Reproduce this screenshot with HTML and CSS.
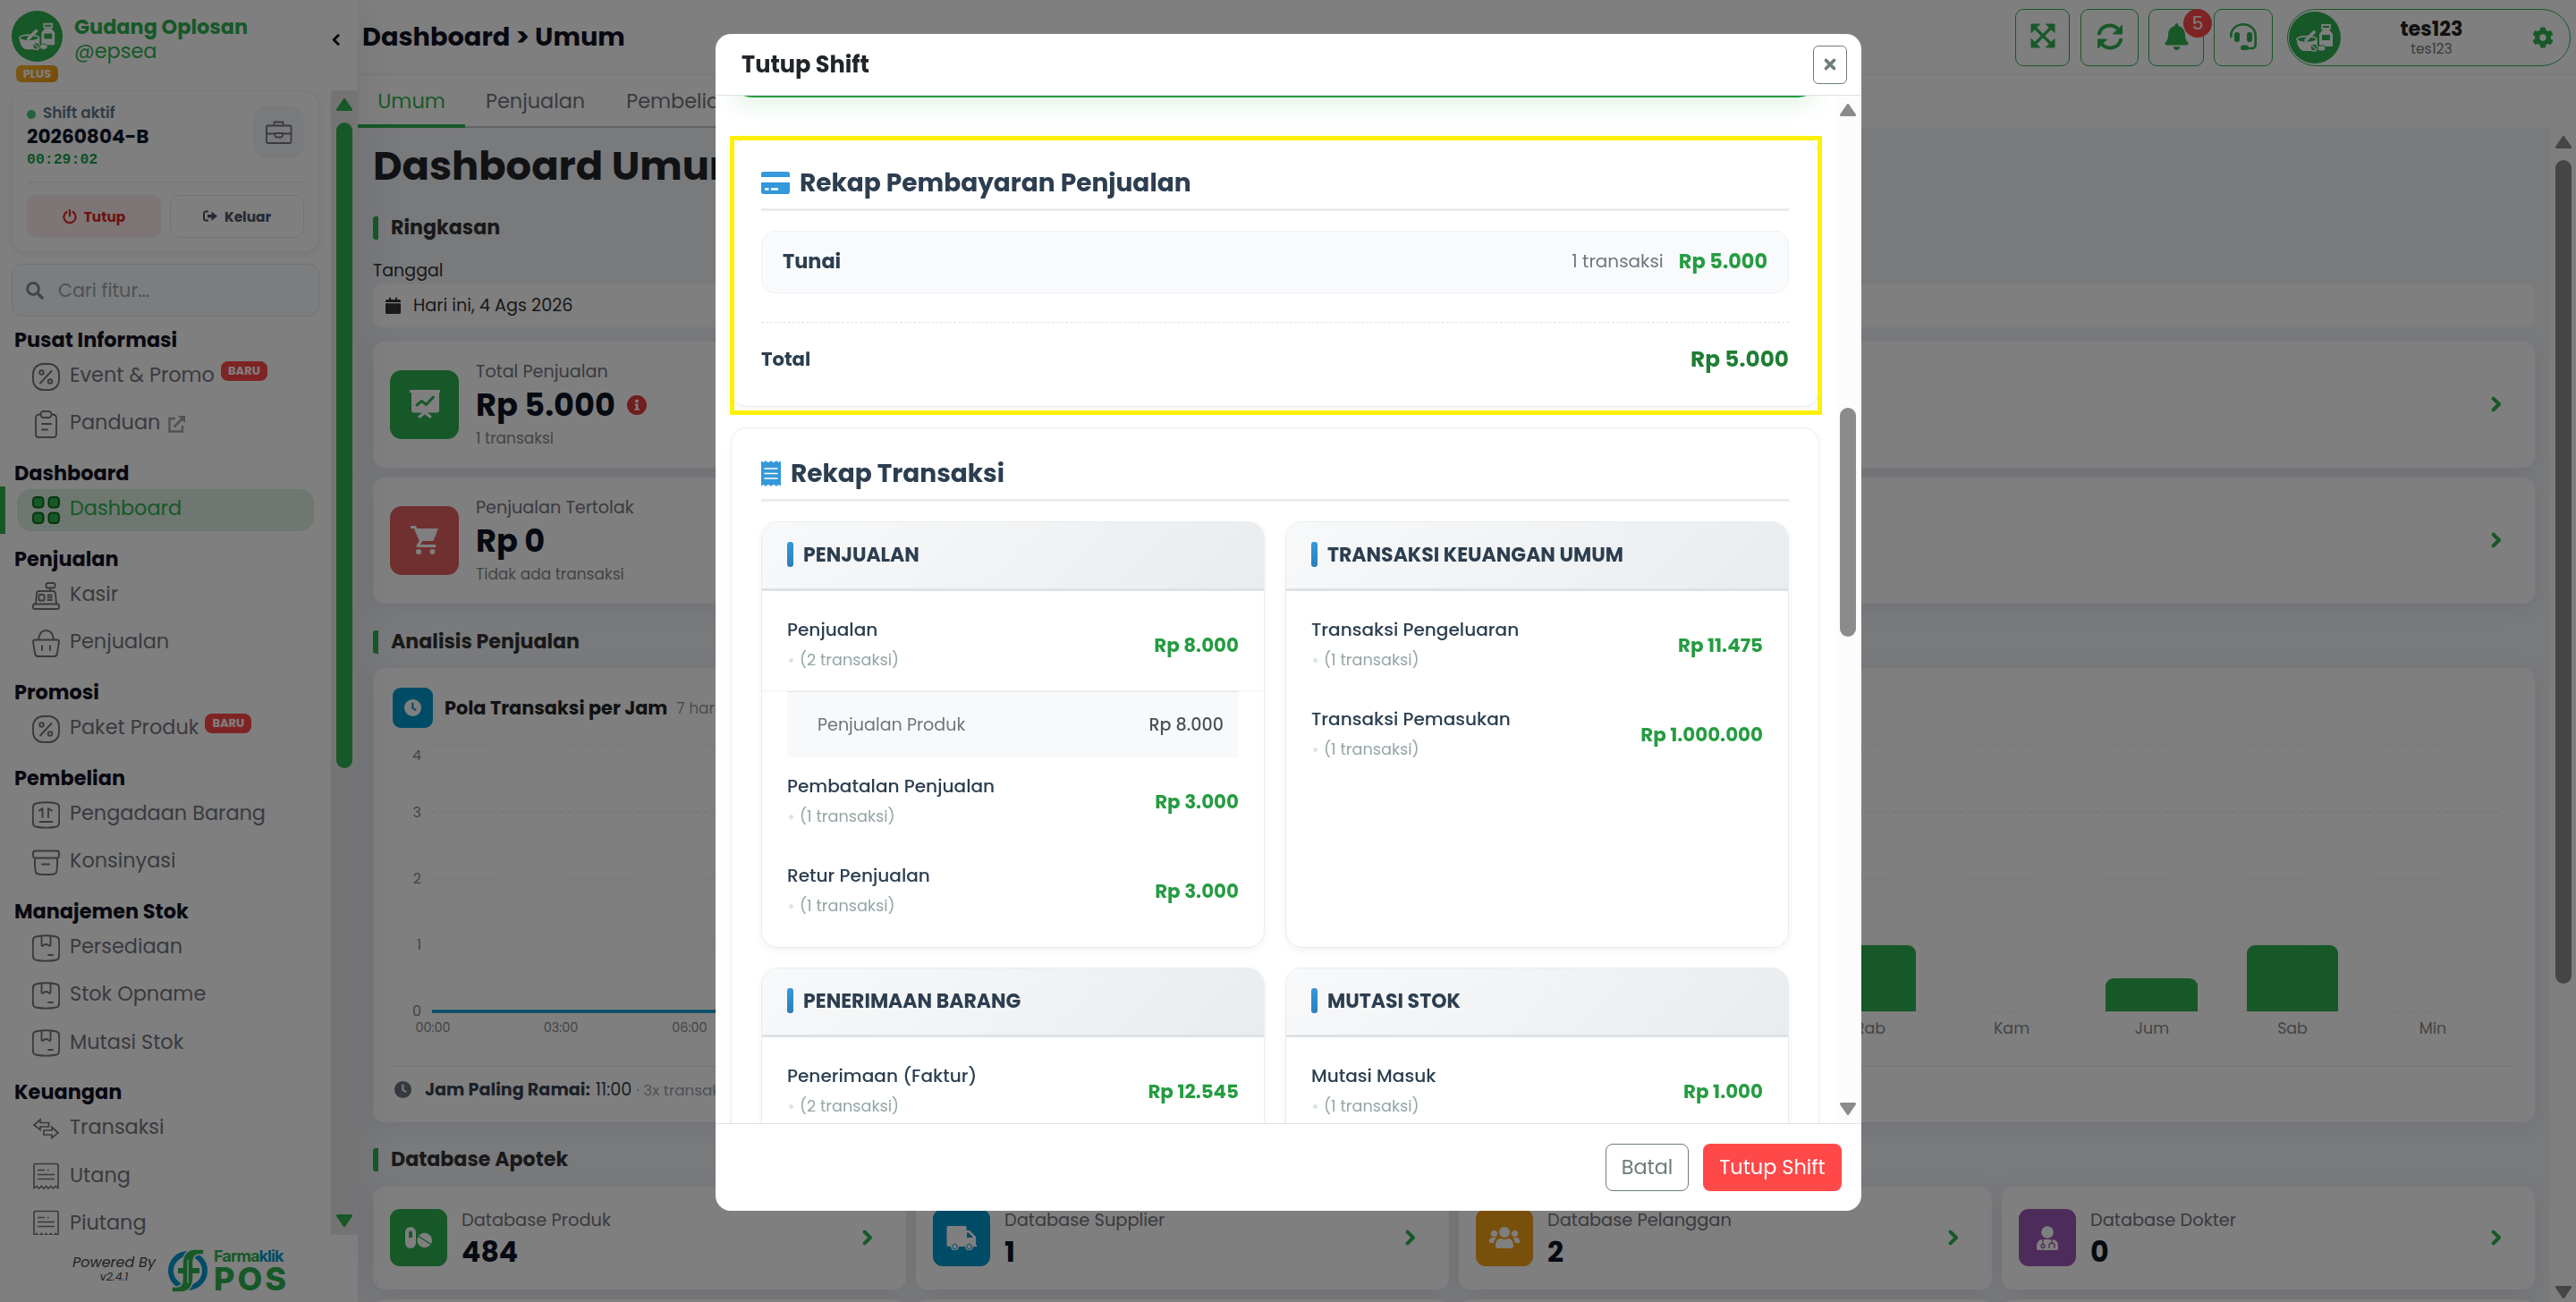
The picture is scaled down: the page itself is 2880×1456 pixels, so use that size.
FILE: index.html
```html
<!DOCTYPE html>
<html lang="id">
<head>
  <meta charset="UTF-8">
  <title>Dashboard - Gudang Oplosan</title>
  <meta name="viewport" content="width=device-width, initial-scale=1.0">
  <link rel="stylesheet" href="styles.css">
</head>
<body>

  <!-- Icon sprite -->
  <svg class="sprite" width="0" height="0">
    <symbol id="i-pharmacy" viewBox="0 0 58 58">
      <circle cx="29" cy="29" r="29" fill="#2fb150"/>
      <path d="M9 32h23c0 7-3 10-6 12H16c-4-2-7-6-7-12z" fill="#fff"/>
      <ellipse cx="20" cy="31" rx="11" ry="3.4" fill="#2fb150" stroke="#fff" stroke-width="1.6"/>
      <path d="M19 32l9-9" stroke="#fff" stroke-width="3.6" stroke-linecap="round"/>
      <path d="M37 15h9v4h-9z" fill="none" stroke="#fff" stroke-width="1.8"/>
      <path d="M38 20h7l4 5v14H34V25z" fill="#fff"/>
      <rect x="37" y="26" width="9" height="6" fill="#2fb150"/>
      <circle cx="28" cy="40" r="4" fill="#2fb150" stroke="#fff" stroke-width="1.6"/>
      <path d="M26 38l4 4" stroke="#fff" stroke-width="1.4"/>
      <rect x="32" y="38" width="9" height="6" rx="3" fill="#fff" stroke="#2fb150"/>
    </symbol>
    <symbol id="i-chev" viewBox="0 0 12 18"><path d="M2.6 2.6L9 9l-6.400 6.400" fill="none" stroke="currentColor" stroke-width="4" stroke-linecap="round" stroke-linejoin="round"/></symbol>
    <symbol id="i-briefcase" viewBox="0 0 30 26"><g fill="none" stroke="currentColor" stroke-width="1.800" stroke-linejoin="round"><rect x="1" y="5.500" width="27.500" height="19.500" rx="1.500"/><path d="M9.500 5.500V1.500h10v4M1 14.500h9.500M19 14.500h9.500M10.500 14v3l1.500 1.500h5.500l1.500-1.500v-3z"/></g></symbol>
    <symbol id="i-power" viewBox="0 0 16 16"><path d="M4.500 3a6.600 6.600 0 1 0 7 0M8 1v6.500" fill="none" stroke="currentColor" stroke-width="2.200" stroke-linecap="round"/></symbol>
    <symbol id="i-exit" viewBox="0 0 16 14"><path d="M6 1.500H3a2 2 0 0 0-2 2v6a2 2 0 0 0 2 2h3" fill="none" stroke="currentColor" stroke-width="2"/><path d="M5 5h4.500V1.500L16 6.700 9.500 12V8.500H5z" fill="currentColor"/></symbol>
    <symbol id="i-search" viewBox="0 0 20 20"><circle cx="8" cy="8" r="6.400" fill="none" stroke="currentColor" stroke-width="3"/><path d="M13 13l5 5" stroke="currentColor" stroke-width="3.500" stroke-linecap="round"/></symbol>
    <symbol id="i-percent" viewBox="0 0 31 31"><g fill="none" stroke="currentColor" stroke-width="1.900" stroke-linecap="round"><rect x="1" y="1" width="29" height="29" rx="11"/><path d="M9 22.500L21.500 9"/><circle cx="10.500" cy="10.500" r="2.300"/><circle cx="20" cy="20.500" r="2.300"/></g></symbol>
    <symbol id="i-clip" viewBox="0 0 31 31"><g fill="none" stroke="currentColor" stroke-width="1.900" stroke-linecap="round"><path d="M9 4.500C5 4.500 4 5.500 4 9v17c0 3 1 4 3 4h17c2 0 3-1 3-4V9c0-3.500-1-4.500-5-4.500"/><rect x="9.500" y="1" width="12" height="7" rx="3.200"/><path d="M11 15h10M11 21.500h6"/></g></symbol>
    <symbol id="i-grid" viewBox="0 0 31 31"><g fill="#2fb150" stroke="#0b6a1c" stroke-width="2"><rect x="1" y="1" width="11.500" height="11.500" rx="3.500"/><rect x="18.500" y="1" width="11.500" height="11.500" rx="3.500"/><rect x="1" y="18.500" width="11.500" height="11.500" rx="3.500"/><rect x="18.500" y="18.500" width="11.500" height="11.500" rx="3.500"/></g></symbol>
    <symbol id="i-kasir" viewBox="0 0 31 31"><g fill="none" stroke="currentColor" stroke-width="1.900" stroke-linecap="round" stroke-linejoin="round"><rect x="15.500" y="1" width="10" height="5.500" rx="2"/><path d="M20 6.500V10M4 24.500l1-11.500c0-2 1-3 3-3h15c2 0 3 1 3 3l1 11.500"/><rect x="1" y="24.500" width="29" height="5.500" rx="1.500"/><rect x="7.500" y="14" width="6" height="6.500" rx="1"/><path d="M17.500 14.500h4.500M17.500 20h4.500M17.500 17.300h4.500"/></g></symbol>
    <symbol id="i-basket" viewBox="0 0 31 31"><g fill="none" stroke="currentColor" stroke-width="1.900" stroke-linecap="round" stroke-linejoin="round"><path d="M1 13.500c0-1.500.8-2 2-2h25c1.200 0 2 .5 2 2l-2 13c-.4 2.500-1 3.500-3.500 3.500h-18C4 30 3.400 29 3 26.500zM7 11C8 4 11 1 15.500 1S23 4 24 11M11 18v5M20 18v5"/></g></symbol>
    <symbol id="i-order" viewBox="0 0 31 31"><g fill="none" stroke="currentColor" stroke-width="1.900" stroke-linecap="round" stroke-linejoin="round"><path d="M4 2.500C12 .7 19 .7 27 2.500c2 .5 3 2 3 4 .4 6 .4 12 0 18 0 2-1 3.500-3 4-8 1.600-15 1.600-23 0-2-.5-3-2-3-4-.4-6-.4-12 0-18 0-2 1-3.500 3-4z"/><path d="M8 10.500L11.500 8v10M18 18V8l4 2.500M8.500 23h14"/></g></symbol>
    <symbol id="i-archive" viewBox="0 0 31 31"><g fill="none" stroke="currentColor" stroke-width="1.900" stroke-linecap="round"><rect x="1" y="2.500" width="29" height="8" rx="2.500"/><path d="M3 11c-.3 6 0 10 .6 14 .3 2.300 1.300 3.200 3.500 3.500 6 .8 11 .8 17 0 2.200-.3 3-1.200 3.300-3.500.6-4 .9-8 .6-14M11 17.500h8"/></g></symbol>
    <symbol id="i-box" viewBox="0 0 31 31"><g fill="none" stroke="currentColor" stroke-width="1.900" stroke-linecap="round" stroke-linejoin="round"><path d="M4 2.500C12 .7 19 .7 27 2.500c2 .5 3 2 3 4 .4 6 .4 12 0 18 0 2-1 3.500-3 4-8 1.600-15 1.600-23 0-2-.5-3-2-3-4-.4-6-.4-12 0-18 0-2 1-3.500 3-4z"/><path d="M10.500 2v9.500c0 1.500 1 1.700 2 .8 2-1.600 4-1.600 6 0 1 .9 2 .7 2-.8V2M18 23h5"/></g></symbol>
    <symbol id="i-swap" viewBox="0 0 31 31"><path d="M2 11l7-6v3.500h9.500V13H9v3.500zM13 17h9v-3.500l7 6.300-7 5.700V22h-9z" fill="none" stroke="currentColor" stroke-width="1.700"/></symbol>
    <symbol id="i-bill" viewBox="0 0 31 31"><path d="M2 28.500V3c0-1 .5-1.500 1.500-1.500h24c1 0 1.500.5 1.500 1.500v25.500l-3-2-2.700 2.700-2.700-2.700-2.600 2.700-2.500-2.700-2.500 2.700-2.700-2.700-2.600 2.700L5 26.500zM6 8.500h8M17 8.500h1.500M6 13.500h19M6 18.500h19" fill="none" stroke="currentColor" stroke-width="1.600"/></symbol>
    <symbol id="i-ext" viewBox="0 0 19 19"><path d="M8 3H1.500v14.500H16V11" fill="none" stroke="currentColor" stroke-width="2.400"/><path d="M6.500 12.500L15.500 3.500" stroke="currentColor" stroke-width="2.800"/><path d="M11 0h8v8z" fill="currentColor"/></symbol>
    <symbol id="i-expand" viewBox="0 0 28 28"><path d="M5 5l18 18M23 5L5 23" stroke="currentColor" stroke-width="3.200"/><path d="M1 1h9.500L1 10.500zM27 1v9.500L17.500 1zM1 27v-9.500l9.500 9.500zM27 27h-9.500l9.500-9.500z" fill="currentColor" stroke="currentColor" stroke-linejoin="round"/></symbol>
    <symbol id="i-sync" viewBox="0 0 30 30"><path d="M2.500 13A12.500 12.500 0 0 1 24 6.500M27.500 17A12.500 12.500 0 0 1 6 23.500" fill="none" stroke="currentColor" stroke-width="4"/><path d="M28.500 2v10h-10zM1.500 28V18h10z" fill="currentColor" stroke="currentColor" stroke-linejoin="round"/></symbol>
    <symbol id="i-bell" viewBox="0 0 448 512"><path fill="currentColor" d="M224 512c35.320 0 63.970-28.650 63.970-64H160.030c0 35.350 28.650 64 63.970 64zm215.390-149.710c-19.320-20.760-55.470-51.990-55.470-154.290 0-77.700-54.480-139.900-127.940-155.160V32c0-17.670-14.320-32-31.980-32s-31.980 14.330-31.980 32v20.840C118.560 68.100 64.080 130.300 64.080 208c0 102.300-36.150 133.530-55.470 154.290-6 6.450-8.660 14.160-8.610 21.710.11 16.400 12.980 32 32.100 32h383.800c19.120 0 32-15.600 32.100-32 .05-7.550-2.610-15.270-8.610-21.710z"/></symbol>
    <symbol id="i-headset" viewBox="0 0 30 30"><path d="M1.300 15v-1.500a13.700 12.200 0 0 1 27.400 0V24a4 4 0 0 1-4 4H16" fill="none" stroke="currentColor" stroke-width="2.600" stroke-linecap="round"/><rect x="5" y="10" width="6" height="11" rx="2.800" fill="currentColor"/><rect x="19" y="10" width="6" height="11" rx="2.800" fill="currentColor"/><rect x="12" y="24.500" width="9" height="5.500" rx="2.700" fill="currentColor"/></symbol>
    <symbol id="i-cog" viewBox="0 0 512 512"><path fill="currentColor" d="M487.400 315.700l-42.600-24.600c4.300-23.200 4.300-47 0-70.200l42.600-24.600c4.900-2.800 7.100-8.600 5.500-14-11.100-35.600-30-67.800-54.700-94.600-3.800-4.100-10-5.100-14.800-2.300L380.800 110c-17.900-15.400-38.500-27.300-60.800-35.100V25.800c0-5.600-3.900-10.500-9.400-11.700-36.700-8.200-74.300-7.800-109.200 0-5.500 1.200-9.400 6.100-9.400 11.700V75c-22.200 7.900-42.800 19.800-60.800 35.100L88.700 85.500c-4.900-2.800-11-1.900-14.800 2.300-24.700 26.700-43.600 58.900-54.700 94.600-1.700 5.400.6 11.200 5.500 14L67.300 221c-4.300 23.200-4.300 47 0 70.200l-42.600 24.600c-4.900 2.800-7.100 8.600-5.500 14 11.100 35.600 30 67.800 54.700 94.600 3.800 4.100 10 5.100 14.800 2.300l42.600-24.600c17.900 15.400 38.500 27.300 60.800 35.100v49.200c0 5.600 3.900 10.500 9.400 11.700 36.700 8.200 74.300 7.800 109.200 0 5.500-1.200 9.400-6.100 9.400-11.700v-49.200c22.200-7.900 42.800-19.800 60.800-35.100l42.600 24.600c4.900 2.800 11 1.900 14.800-2.300 24.700-26.700 43.600-58.900 54.700-94.600 1.500-5.500-.7-11.300-5.600-14.100zM256 336c-44.100 0-80-35.900-80-80s35.900-80 80-80 80 35.900 80 80-35.900 80-80 80z"/></symbol>
    <symbol id="i-calendar" viewBox="0 0 17 20"><path d="M1.500 3H4V.8h2V3h5V.8h2V3h2.500A1.500 1.500 0 0 1 17 4.500V6H0V4.500A1.500 1.500 0 0 1 1.500 3zM0 7.200h17v10.300a1.500 1.500 0 0 1-1.500 1.500h-14A1.500 1.500 0 0 1 0 17.500z" fill="currentColor"/></symbol>
    <symbol id="i-board" viewBox="0 0 34 32"><path d="M0 0h34v3h-1v20a2.500 2.500 0 0 1-2.500 2.500H20l5 4-2 2.500-6-4.500-6 4.500-2-2.500 5-4H4.500A2.500 2.500 0 0 1 2 23V3H0z" fill="currentColor"/><path d="M8 17l5.500-4.500 5 4L26.500 8" fill="none" stroke="#2fb150" stroke-width="3" stroke-linecap="round" stroke-linejoin="round"/></symbol>
    <symbol id="i-cart" viewBox="0 0 32 34"><path d="M1 2.500h4l6.500 15.500L8 23.500h19" fill="none" stroke="currentColor" stroke-width="3.200" stroke-linecap="round" stroke-linejoin="round"/><path d="M6 4h25l-5.500 14H11.500z" fill="currentColor"/><circle cx="9" cy="30" r="3" fill="currentColor"/><circle cx="24.500" cy="30" r="3" fill="currentColor"/></symbol>
    <symbol id="i-info" viewBox="0 0 22 22"><circle cx="11" cy="11" r="11" fill="currentColor"/><circle cx="11" cy="6.500" r="1.900" fill="#fff"/><path d="M8.500 9.500H12.500v5.500h1.300v1.800H8.500V15h1.300v-3.700H8.500z" fill="#fff"/></symbol>
    <symbol id="i-clock" viewBox="0 0 20 20"><path fill-rule="evenodd" d="M10 0a10 10 0 1 0 0 20 10 10 0 0 0 0-20zM8.800 4h2.200v6l3.500 2-1.200 1.800-4.500-2.800z" fill="currentColor"/></symbol>
    <symbol id="i-pills" viewBox="0 0 30 24"><rect x="0" y="0" width="12" height="24" rx="6" fill="currentColor"/><path d="M4 12V6.500a2 2 0 0 1 4 0V12z" fill="#2fb150"/><circle cx="21.700" cy="15" r="8.300" fill="currentColor"/><path d="M15 10.500l13.500 9" stroke="#2fb150" stroke-width="1.500"/></symbol>
    <symbol id="i-truck" viewBox="0 0 34 27"><path d="M2 0h19a1.500 1.500 0 0 1 1.500 1.500V5H26l7 7v9h1v2h-4a4.500 4.500 0 0 1-9 0h-7a4.500 4.500 0 0 1-9 0H2a1.500 1.500 0 0 1-1.500-1.500v-20A1.500 1.500 0 0 1 2 0zM23 7.500V13h7l-5-5.500z" fill="currentColor" fill-rule="evenodd"/><circle cx="9.500" cy="23" r="2.700" fill="currentColor" stroke="#0099cc"/><circle cx="25.500" cy="23" r="2.700" fill="currentColor" stroke="#0099cc"/></symbol>
    <symbol id="i-users" viewBox="0 0 34 24"><g fill="currentColor"><circle cx="17" cy="6" r="6"/><circle cx="5.500" cy="7.500" r="3.600"/><circle cx="28.500" cy="7.500" r="3.600"/><path d="M7 21c0-5 2.500-8 6-8 3 1.300 5 1.300 8 0 3.500 0 6 3 6 8 0 2-1 3-3 3H10c-2 0-3-1-3-3zM0 16c0-3 2-4 4-4h4c-2 2-2.800 4-3 6H1.500C.5 18 0 17.500 0 16zM34 16c0-3-2-4-4-4h-4c2 2 2.800 4 3 6h3.500c1 0 1.500-.5 1.500-2z"/></g></symbol>
    <symbol id="i-doctor" viewBox="0 0 24 27"><g fill="currentColor"><circle cx="12" cy="7" r="6.800"/><path d="M0 23c0-5 2.500-8 7-8h10c4.500 0 7 3 7 8v2c0 1-.8 2-2 2H2c-1.200 0-2-1-2-2z"/></g><path d="M7 15v5M17 15v3M14 25v-3a3 3 0 0 1 6 0v3" fill="none" stroke="#9b59b6" stroke-width="1.300"/><circle cx="7" cy="22.500" r="2" fill="none" stroke="#9b59b6" stroke-width="1.300"/></symbol>
    <symbol id="i-card" viewBox="0 0 32 25"><path d="M2.500 0h27A2.500 2.500 0 0 1 32 2.500V6H0V2.500A2.500 2.500 0 0 1 2.500 0zM0 12h32v10.500a2.500 2.500 0 0 1-2.500 2.500h-27A2.500 2.500 0 0 1 0 22.500z" fill="currentColor"/><path d="M4 19.500h4.500M11 19.500h8" stroke="#fff" stroke-width="2.600"/></symbol>
    <symbol id="i-receipt" viewBox="0 0 22 29"><path d="M0 .5L2.500 2 5 .3 8 2.300 11 .3l3 2 3-2L19.500 2 22 .5v28L19.500 27 17 28.700l-3-2-3 2-3-2-3 2L2.500 27 0 28.500z" fill="currentColor"/><path d="M4 9h14M4 14.500h14M4 20h14" stroke="#fff" stroke-width="1.600" stroke-linecap="round"/></symbol>
    <symbol id="i-close" viewBox="0 0 14 14"><path d="M2.500 2.500l9 9M11.500 2.500l-9 9" stroke="currentColor" stroke-width="3.600" stroke-linecap="round"/></symbol>
    <symbol id="i-up" viewBox="0 0 18 14"><path d="M9 1.500L16.500 12.500h-15z" fill="currentColor" stroke="currentColor" stroke-width="3" stroke-linejoin="round"/></symbol>
    <symbol id="i-logo" viewBox="0 0 44 48">
      <circle cx="22" cy="24" r="19" fill="none" stroke="#0099cc" stroke-width="6"/>
      <path d="M40 0v6h-5c-5 0-7 3-7 8v18c0 9-5 16-14 16H4v-6h5c5 0 7-3 7-8V16C16 7 21 0 30 0z" fill="#2fb150" stroke="#fff" stroke-width="1.500"/>
      <path d="M11 24h24" stroke="#2fb150" stroke-width="6"/>
      <path d="M22 12v26" stroke="#fff" stroke-width="1.400"/>
    </symbol>
  </svg>

  <div class="app">

    <aside class="sidebar">
      <div class="brand">
        <div class="brand-logo">
          <svg width="57" height="57"><use href="#i-pharmacy"/></svg>
          <span class="plus">PLUS</span>
        </div>
        <div class="brand-text">
          <strong>Gudang Oplosan</strong>
          <span>@epsea</span>
        </div>
        <svg class="collapse" width="9" height="15"><use href="#i-chev"/></svg>
      </div>

      <div class="side-scroll">
        <div class="side-content">
          <div class="shift">
            <div class="shift-top">
              <div class="shift-info">
                <span class="shift-status"><i></i>Shift aktif</span>
                <b>20260804-B</b>
                <span class="timer">00:29:02</span>
              </div>
              <div class="shift-icon"><svg width="30" height="26"><use href="#i-briefcase"/></svg></div>
            </div>
            <div class="shift-actions">
              <button class="btn-tutup"><svg width="16" height="16"><use href="#i-power"/></svg>Tutup</button>
              <button class="btn-keluar"><svg width="16" height="14"><use href="#i-exit"/></svg>Keluar</button>
            </div>
          </div>

          <div class="search"><svg width="20" height="20"><use href="#i-search"/></svg>Cari fitur...</div>

          <nav class="nav">
            <h6>Pusat Informasi</h6>
            <a><svg><use href="#i-percent"/></svg><span>Event &amp; Promo</span><em>BARU</em></a>
            <a><svg><use href="#i-clip"/></svg><span>Panduan</span><svg class="ext"><use href="#i-ext"/></svg></a>
            <h6>Dashboard</h6>
            <a class="active"><svg><use href="#i-grid"/></svg><span>Dashboard</span></a>
            <h6>Penjualan</h6>
            <a><svg><use href="#i-kasir"/></svg><span>Kasir</span></a>
            <a><svg><use href="#i-basket"/></svg><span>Penjualan</span></a>
            <h6>Promosi</h6>
            <a><svg><use href="#i-percent"/></svg><span>Paket Produk</span><em>BARU</em></a>
            <h6>Pembelian</h6>
            <a><svg><use href="#i-order"/></svg><span>Pengadaan Barang</span></a>
            <a><svg><use href="#i-archive"/></svg><span>Konsinyasi</span></a>
            <h6>Manajemen Stok</h6>
            <a><svg><use href="#i-box"/></svg><span>Persediaan</span></a>
            <a><svg><use href="#i-box"/></svg><span>Stok Opname</span></a>
            <a><svg><use href="#i-box"/></svg><span>Mutasi Stok</span></a>
            <h6>Keuangan</h6>
            <a><svg><use href="#i-swap"/></svg><span>Transaksi</span></a>
            <a><svg><use href="#i-bill"/></svg><span>Utang</span></a>
            <a><svg><use href="#i-bill"/></svg><span>Piutang</span></a>
          </nav>
        </div>
        <div class="scrollbar side-bar">
          <svg width="18" height="14"><use href="#i-up"/></svg>
          <i></i>
          <svg class="down" width="18" height="14"><use href="#i-up"/></svg>
        </div>
      </div>

      <div class="powered">
        <div class="powered-text">Powered By<small>v2.4.1</small></div>
        <svg width="44" height="48"><use href="#i-logo"/></svg>
        <div class="powered-name"><span>Farma<i>klik</i></span><b>POS</b></div>
      </div>
    </aside>

    <main class="main">
      <header class="topbar">
        <h1>Dashboard &gt; Umum</h1>
        <div class="tools">
          <button class="t1"><svg width="28" height="28"><use href="#i-expand"/></svg></button>
          <button class="t2"><svg width="30" height="30"><use href="#i-sync"/></svg></button>
          <button class="t3"><svg width="27" height="30"><use href="#i-bell"/></svg><span>5</span></button>
          <button class="t4"><svg width="30" height="30"><use href="#i-headset"/></svg></button>
          <div class="user">
            <svg width="58" height="58"><use href="#i-pharmacy"/></svg>
            <div><b>tes123</b><small>tes123</small></div>
            <svg class="cog" width="24" height="24"><use href="#i-cog"/></svg>
          </div>
        </div>
      </header>
      <div class="tabs">
        <a class="on">Umum</a><a>Penjualan</a><a>Pembelian</a>
      </div>

      <div class="page">
        <div class="page-content">
          <h2>Dashboard Umum</h2>

          <h3>Ringkasan</h3>
          <label>Tanggal</label>
          <div class="date"><svg width="17" height="20"><use href="#i-calendar"/></svg>Hari ini, 4 Ags 2026</div>

          <div class="stat">
            <div class="tile green"><svg width="34" height="32"><use href="#i-board"/></svg></div>
            <div class="stat-text">
              <span>Total Penjualan</span>
              <b>Rp 5.000 <svg width="22" height="22"><use href="#i-info"/></svg></b>
              <small>1 transaksi</small>
            </div>
            <svg class="go" width="12" height="18"><use href="#i-chev"/></svg>
          </div>
          <div class="stat">
            <div class="tile red"><svg width="32" height="34"><use href="#i-cart"/></svg></div>
            <div class="stat-text">
              <span>Penjualan Tertolak</span>
              <b>Rp 0</b>
              <small>Tidak ada transaksi</small>
            </div>
            <svg class="go" width="12" height="18"><use href="#i-chev"/></svg>
          </div>

          <h3 class="h-analisis">Analisis Penjualan</h3>
          <div class="charts">
            <div class="chart">
              <div class="chart-head">
                <div class="tile blue"><svg width="19" height="19"><use href="#i-clock"/></svg></div>
                <b>Pola Transaksi per Jam</b><small>7 hari terakhir</small>
              </div>
              <svg class="plot" width="1159" height="378">
                <g class="gridlines"><path d="M44 20H1144M44 94H1144M44 168H1144M44 242H1144"/></g>
                <g class="ylab"><text x="32" y="36">4</text><text x="32" y="100">3</text><text x="32" y="174">2</text><text x="32" y="248">1</text><text x="32" y="322">0</text></g>
                <path d="M44 317H570L618 94L666 317H1144" class="line"/>
                <g class="xlab"><text x="45" y="340">00:00</text><text x="188" y="340">03:00</text><text x="332" y="340">06:00</text><text x="475" y="340">09:00</text></g>
              </svg>
              <div class="chart-foot"><svg width="19" height="19"><use href="#i-clock"/></svg><b>Jam Paling Ramai:</b> 11:00 <small>· 3x transaksi</small></div>
            </div>
            <div class="chart">
              <div class="chart-head"></div>
              <svg class="plot" width="1159" height="378">
                <g class="gridlines"><path d="M44 20H1144M44 94H1144M44 168H1144M44 242H1144M44 317H1144"/></g>
                <g class="bars"><path d="M387 317V252a9 9 0 0 1 9-9h84a9 9 0 0 1 9 9v65zM701 317V289a9 9 0 0 1 9-9h85a9 9 0 0 1 9 9v28zM859 317V252a9 9 0 0 1 9-9h84a9 9 0 0 1 9 9v65z"/></g>
                <g class="xlab day"><text x="438" y="342">Rab</text><text x="596" y="342">Kam</text><text x="753" y="342">Jum</text><text x="910" y="342">Sab</text><text x="1067" y="342">Min</text></g>
              </svg>
              <div class="chart-foot"></div>
            </div>
          </div>

          <h3 class="h-db">Database Apotek</h3>
          <div class="dbs">
            <div class="db"><div class="tile green"><svg width="30" height="24"><use href="#i-pills"/></svg></div><div><span>Database Produk</span><b>484</b></div><svg class="go" width="12" height="18"><use href="#i-chev"/></svg></div>
            <div class="db"><div class="tile blue"><svg width="34" height="27"><use href="#i-truck"/></svg></div><div><span>Database Supplier</span><b>1</b></div><svg class="go" width="12" height="18"><use href="#i-chev"/></svg></div>
            <div class="db"><div class="tile orange"><svg width="34" height="24"><use href="#i-users"/></svg></div><div><span>Database Pelanggan</span><b>2</b></div><svg class="go" width="12" height="18"><use href="#i-chev"/></svg></div>
            <div class="db"><div class="tile purple"><svg width="24" height="27"><use href="#i-doctor"/></svg></div><div><span>Database Dokter</span><b>0</b></div><svg class="go" width="12" height="18"><use href="#i-chev"/></svg></div>
            <div class="db"></div><div class="db"></div><div class="db"></div><div class="db"></div>
          </div>
        </div>
        <div class="scrollbar page-bar">
          <svg width="18" height="14"><use href="#i-up"/></svg>
          <i></i>
          <svg class="down" width="18" height="14"><use href="#i-up"/></svg>
        </div>
      </div>
    </main>
  </div>

  <div class="backdrop">
    <div class="modal">
      <div class="modal-header">
        <h4>Tutup Shift</h4>
        <button class="close"><svg width="14" height="14"><use href="#i-close"/></svg></button>
      </div>

      <div class="modal-body">
        <div class="modal-content">
          <div class="summary"></div>

          <section class="card card-pay">
            <h5><svg width="32" height="25"><use href="#i-card"/></svg>Rekap Pembayaran Penjualan</h5>
            <div class="pay-row"><b>Tunai</b><span>1 transaksi</span><strong>Rp 5.000</strong></div>
            <div class="pay-total"><b>Total</b><strong>Rp 5.000</strong></div>
            <div class="highlight"></div>
          </section>

          <section class="card card-trx">
            <h5><svg width="22" height="29"><use href="#i-receipt"/></svg>Rekap Transaksi</h5>
            <div class="groups">
              <div class="group">
                <h6>Penjualan</h6>
                <div class="item lined"><div>Penjualan<small>(2 transaksi)</small></div><b>Rp 8.000</b></div>
                <div class="sub"><span>Penjualan Produk</span><span>Rp 8.000</span></div>
                <div class="item"><div>Pembatalan Penjualan<small>(1 transaksi)</small></div><b>Rp 3.000</b></div>
                <div class="item"><div>Retur Penjualan<small>(1 transaksi)</small></div><b>Rp 3.000</b></div>
              </div>
              <div class="group">
                <h6>Transaksi Keuangan Umum</h6>
                <div class="item"><div>Transaksi Pengeluaran<small>(1 transaksi)</small></div><b>Rp 11.475</b></div>
                <div class="item"><div>Transaksi Pemasukan<small>(1 transaksi)</small></div><b>Rp 1.000.000</b></div>
              </div>
              <div class="group">
                <h6>Penerimaan Barang</h6>
                <div class="item"><div>Penerimaan (Faktur)<small>(2 transaksi)</small></div><b>Rp 12.545</b></div>
              </div>
              <div class="group">
                <h6>Mutasi Stok</h6>
                <div class="item"><div>Mutasi Masuk<small>(1 transaksi)</small></div><b>Rp 1.000</b></div>
              </div>
            </div>
          </section>
        </div>
        <div class="scrollbar modal-bar">
          <svg width="18" height="14"><use href="#i-up"/></svg>
          <i></i>
          <svg class="down" width="18" height="14"><use href="#i-up"/></svg>
        </div>
      </div>

      <div class="modal-footer">
        <button class="btn-batal">Batal</button>
        <button class="btn-danger">Tutup Shift</button>
      </div>
    </div>
  </div>

</body>
</html>
```
FILE: styles.css
```css
:root {
  --green: #2fb150;
  --red: #ff4949;
  --blue: #0099cc;
  --muted: #74747e;
}

* {
  box-sizing: border-box;
}

body {
  margin: 0;
  height: 1456px;
  overflow: hidden;
  font-family: 'Poppins', 'Inter', sans-serif;
  font-size: 22.4px;
  color: #111827;
  background: #fff;
}

h1, h2, h3, h4, h5, h6 {
  margin: 0;
  font-weight: 700;
}

button {
  font: inherit;
  padding: 0;
  background: none;
  border: none;
}

svg {
  flex: none;
}

.sprite {
  position: absolute;
}

.app {
  display: flex;
  height: 1456px;
}

/* ---------- Sidebar ---------- */
.sidebar {
  position: relative;
  z-index: 2;
  display: flex;
  flex-direction: column;
  width: 400px;
  background: #fff;
  box-shadow: 0 0 50px rgba(0, 0, 0, 0.1);
}

.brand {
  display: flex;
  height: 101px;
  padding: 12px 20px 0 13px;
}

.brand-logo {
  width: 57px;
}

.brand-logo svg {
  display: block;
}

.plus {
  display: block;
  width: 47px;
  height: 19px;
  margin: 4px 0 0 5px;
  border-radius: 6px;
  background: linear-gradient(135deg, #f5b32a, #ee9a10);
  color: #fff;
  font-size: 13px;
  font-weight: 700;
  line-height: 19px;
  text-align: center;
}

.brand-text {
  display: flex;
  flex-direction: column;
  flex: 1;
  padding: 5px 0 0 13px;
  color: var(--green);
  line-height: 27px;
}

.brand-text strong {
  font-weight: 700;
}

.collapse {
  margin-top: 25px;
  transform: scaleX(-1);
  color: #111;
}

.side-scroll {
  display: flex;
  height: 1280px;
  overflow: hidden;
}

.side-content {
  width: 370px;
}

.scrollbar {
  display: flex;
  flex-direction: column;
  align-items: center;
}

.scrollbar i {
  width: 18px;
  border-radius: 9px;
  background: currentColor;
}

.scrollbar .down {
  margin-top: auto;
  transform: rotate(180deg);
}

.side-bar {
  width: 30px;
  padding: 9px 0;
  background: #e9e9e9;
  color: var(--green);
}

.side-bar i {
  height: 722px;
  margin-top: 13px;
}

.shift {
  width: 344px;
  height: 181px;
  margin-left: 13px;
  padding: 17px 16px;
  border: 1px solid #eef0f4;
  border-radius: 18px;
  box-shadow: 0 3px 10px rgba(15, 23, 42, 0.08);
}

.shift-top {
  display: flex;
  justify-content: space-between;
  height: 86px;
  border-bottom: 2px solid #f1f3f6;
}

.shift-info {
  display: flex;
  flex-direction: column;
}

.shift-status {
  display: flex;
  align-items: center;
  height: 13px;
  color: #64748b;
  font-size: 16.8px;
  font-weight: 600;
}

.shift-status i {
  width: 10px;
  height: 10px;
  margin: 4px 8px 0 0;
  border-radius: 50%;
  background: #4ac57a;
}

.shift-info b {
  margin-top: 6px;
  color: #0f172a;
  font-size: 21.7px;
  font-weight: 700;
  line-height: 30px;
}

.timer {
  color: #16a34a;
  font: bold 16.5px/22px 'Liberation Mono', monospace;
}

.shift-icon {
  display: flex;
  align-items: center;
  justify-content: center;
  width: 57px;
  height: 58px;
  border-radius: 15px;
  background: #f1f5f9;
  color: #74747e;
}

.shift-actions {
  display: flex;
  gap: 10px;
  margin-top: 13px;
}

.shift-actions button {
  display: flex;
  align-items: center;
  justify-content: center;
  gap: 8px;
  width: 150px;
  height: 48px;
  border-radius: 11px;
  font-size: 15.4px;
  font-weight: 700;
}

.btn-tutup {
  background: #fdecec;
  color: #dc2626;
}

.shift-actions .btn-keluar {
  border: 1px solid #e2e8f0;
  color: #475569;
}

.search {
  display: flex;
  align-items: center;
  gap: 16px;
  width: 344px;
  height: 59px;
  margin: 13px 0 0 13px;
  padding-left: 15px;
  border: 1px solid #e1e5ea;
  border-radius: 12px;
  background: #f8fafc;
  color: #9ca3af;
  font-size: 20.8px;
}

.search svg {
  color: #858b95;
}

.nav {
  margin-top: -2px;
}

.nav h6 {
  height: 42.7px;
  padding: 11px 0 0 16px;
  color: #111122;
  font-size: 22.4px;
  line-height: 34px;
}

.nav a {
  position: relative;
  display: flex;
  align-items: center;
  height: 53.2px;
  padding-left: 36px;
  color: var(--muted);
}

.nav a svg {
  width: 31px;
  height: 31px;
  margin-right: 11px;
}

.nav a span {
  padding-bottom: 4px;
}

.nav a em {
  align-self: flex-start;
  width: 52px;
  height: 22px;
  margin: 9px 0 0 7px;
  border-radius: 8px;
  background: var(--red);
  color: #fff;
  font-size: 13px;
  font-style: normal;
  font-weight: 700;
  line-height: 22px;
  text-align: center;
}

.nav a .ext {
  width: 19px;
  height: 19px;
  margin-left: 9px;
  color: #a2a2a2;
}

.nav .active {
  color: var(--green);
}

.nav .active::before {
  content: '';
  position: absolute;
  z-index: -1;
  left: 19px;
  top: 3px;
  width: 332px;
  height: 47px;
  border-radius: 16px;
  background: #ddeee0;
}

.nav .active::after {
  content: '';
  position: absolute;
  left: 0;
  top: 0;
  width: 6px;
  height: 53px;
  background: var(--green);
}

.powered {
  display: flex;
  align-items: flex-start;
  padding: 16px 0 0 81px;
}

.powered-text {
  width: 93px;
  margin: 6px 14px 0 0;
  color: #444;
  font-size: 16px;
  font-style: italic;
  line-height: 18px;
  text-align: center;
  white-space: nowrap;
}

.powered-text small {
  display: block;
  font-size: 12.5px;
  line-height: 14px;
}

.powered-name {
  display: flex;
  flex-direction: column;
  margin-left: 7px;
  color: var(--green);
  font-family: 'Inter', sans-serif;
  font-weight: 700;
}

.powered-name span {
  font-size: 18px;
  line-height: 16px;
  letter-spacing: -0.9px;
}

.powered-name span i {
  color: var(--blue);
  font-style: normal;
}

.powered-name b {
  font-size: 36px;
  font-weight: 800;
  line-height: 35px;
  letter-spacing: 3px;
}

/* ---------- Topbar ---------- */
.main {
  flex: 1;
  display: flex;
  flex-direction: column;
}

.topbar {
  display: flex;
  justify-content: space-between;
  height: 84px;
  padding: 10px 6px 0 5px;
  border-bottom: 1px solid #eee;
}

.topbar h1 {
  color: #111122;
  font-size: 28.8px;
  line-height: 62px;
}

.tools {
  display: flex;
}

.tools button {
  position: relative;
  display: flex;
  justify-content: center;
  height: 64px;
  padding-top: 15px;
  border: 1.5px solid var(--green);
  border-radius: 9px;
  color: var(--green);
}

.t1 { width: 61px; }
.t2 { width: 65px; margin-left: 12px; }
.t3 { width: 62px; margin-left: 11px; }
.t4 { width: 66px; margin-left: 11px; }

.tools button span {
  position: absolute;
  top: -1px;
  right: -10px;
  width: 32px;
  height: 32px;
  border-radius: 50%;
  background: var(--red);
  color: #fff;
  font-size: 20px;
  line-height: 32px;
  text-align: center;
}

.user {
  display: flex;
  align-items: center;
  width: 317px;
  height: 64px;
  margin-left: 16px;
  padding: 0 18px 0 1px;
  border: 1.5px solid var(--green);
  border-radius: 32px;
}

.user div {
  flex: 1;
  display: flex;
  flex-direction: column;
  align-items: center;
  padding-right: 11px;
}

.user b {
  color: #222;
  font-size: 22.4px;
  font-weight: 700;
  line-height: 25px;
}

.user small {
  color: #777;
  font-size: 15.5px;
  line-height: 20px;
}

.user .cog {
  color: var(--green);
}

.tabs {
  display: flex;
  height: 59px;
}

.tabs a {
  padding: 0 23px;
  border-bottom: 2px solid #c6c6c6;
  color: var(--muted);
  line-height: 59px;
}

.tabs .on {
  padding: 0;
  width: 120px;
  border-bottom: 4px solid var(--green);
  color: var(--green);
  text-align: center;
}

/* ---------- Page ---------- */
.page {
  display: flex;
  flex: 1;
  min-height: 0;
  background: #f2f4f9;
}

.page-content {
  width: 2451px;
  padding: 22px 17px 0;
  overflow: hidden;
}

.page-bar {
  width: 29px;
  padding: 9px 0 4px;
  background: #fcfcfc;
  color: #8b8b8b;
}

.page-bar i {
  height: 921px;
  margin-top: 13px;
}

h2 {
  color: #222529;
  font-size: 44.8px;
  line-height: 42px;
}

h3 {
  margin-top: 35px;
  padding-left: 14px;
  border-left: 6px solid var(--green);
  border-radius: 3px;
  color: #333;
  font-size: 22.2px;
  line-height: 26px;
}

label {
  display: block;
  height: 50px;
  padding-top: 23px;
  color: #333;
  font-size: 19px;
  line-height: 24px;
}

.date {
  display: flex;
  align-items: center;
  gap: 14px;
  height: 48px;
  padding: 0 0 1px 14px;
  border-radius: 9px;
  background: #fff;
  color: #333;
  font-size: 19.2px;
}

.stat, .chart, .db {
  border-radius: 13px;
  background: #fff;
  box-shadow: 0 4px 24px rgba(50, 50, 93, 0.08);
}

.stat {
  display: flex;
  align-items: center;
  height: 141px;
  margin-top: 16px;
  padding: 0 37px 1px 19px;
}

.stat + .stat {
  margin-top: 11px;
}

.tile {
  display: flex;
  align-items: center;
  justify-content: center;
  flex: none;
  width: 77px;
  height: 77px;
  border-radius: 13px;
  color: #fff;
}

.green { background: var(--green); }
.red { background: #e06060; }
.blue { background: var(--blue); }
.orange { background: #f0a018; }
.purple { background: #9b59b6; }

.stat-text {
  flex: 1;
  display: flex;
  flex-direction: column;
  padding: 2px 0 0 19px;
}

.stat-text span {
  color: var(--muted);
  font-size: 19.2px;
  line-height: 26px;
}

.stat-text b {
  display: flex;
  align-items: center;
  gap: 13px;
  color: #0c1524;
  font-size: 35.2px;
  font-weight: 700;
  line-height: 48px;
}

.stat-text b svg {
  color: #e03c3c;
}

.stat-text small {
  color: #888;
  font-size: 17px;
  line-height: 26px;
}

.go {
  color: var(--green);
}

.h-analisis {
  margin-top: 30px;
}

.charts {
  display: grid;
  grid-template-columns: 1fr 1fr;
  gap: 11px;
  margin-top: 16px;
}

.chart {
  height: 508px;
  padding: 22px;
}

.chart-head {
  display: flex;
  align-items: center;
  height: 45px;
}

.chart-head .tile {
  width: 45px;
  height: 45px;
  border-radius: 9px;
}

.chart-head b {
  margin-left: 13px;
  color: #222529;
  font-size: 20.8px;
  font-weight: 700;
}

.chart-head small {
  margin-left: 10px;
  color: #999;
  font-size: 17px;
}

.plot {
  display: block;
}

.gridlines path {
  fill: none;
  stroke: #e8e8e8;
  stroke-dasharray: 5 4.5;
}

.plot text {
  fill: #888;
  font-size: 16px;
}

.ylab text {
  text-anchor: end;
}

.plot .xlab text {
  font-size: 14.4px;
  text-anchor: middle;
}

.plot .day text {
  font-size: 17.4px;
}

.line {
  fill: none;
  stroke: var(--blue);
  stroke-width: 3.5;
}

.bars path {
  fill: var(--green);
}

.chart-foot {
  display: flex;
  align-items: center;
  height: 54px;
  padding: 0 0 2px 2px;
  border-top: 1px solid #e6e6e6;
  color: #374151;
  font-size: 19.2px;
}

.chart-foot svg {
  color: #6b7280;
}

.chart-foot b {
  margin: 0 6px 0 15px;
  font-weight: 700;
}

.chart-foot small {
  margin-left: 5px;
  color: #9ca3af;
  font-size: 16.8px;
}

.h-db {
  margin-top: 29px;
}

.dbs {
  display: grid;
  grid-template-columns: repeat(4, 1fr);
  gap: 11px;
  margin-top: 17px;
}

.db {
  display: flex;
  align-items: center;
  height: 115px;
  padding: 0 37px 1px 19px;
}

.db .tile {
  width: 64px;
  height: 64px;
  border-radius: 11px;
}

.db > div:nth-child(2) {
  flex: 1;
  display: flex;
  flex-direction: column;
  padding: 5px 0 0 16px;
}

.db span {
  color: var(--muted);
  font-size: 19.4px;
  line-height: 26px;
}

.db b {
  color: #0c1524;
  font-size: 31.6px;
  font-weight: 700;
  line-height: 44px;
}

/* ---------- Modal ---------- */
.backdrop {
  position: fixed;
  inset: 0;
  z-index: 10;
  background: rgba(0, 0, 0, 0.5);
}

.modal {
  display: flex;
  flex-direction: column;
  width: 1281px;
  height: 1316px;
  margin: 38px 0 0 800px;
  border-radius: 17px;
  background: #fff;
  overflow: hidden;
}

.modal-header {
  display: flex;
  align-items: center;
  justify-content: space-between;
  height: 69px;
  padding: 0 16px 0 29px;
  border-bottom: 1px solid #dee2e6;
}

.modal-header h4 {
  color: #212529;
  font-size: 25.6px;
}

.close {
  display: flex;
  align-items: center;
  justify-content: center;
  width: 38px;
  height: 43px;
  border: 1.5px solid #6c7d7a;
  border-radius: 6px;
  color: #6c7d7a;
}

.modal-body {
  display: flex;
  height: 1149px;
  overflow: hidden;
}

.modal-content {
  width: 1253px;
  padding: 0 19px 0 17px;
}

.modal-bar {
  width: 28px;
  padding: 9px 2px 9px 0;
  background: #fcfcfc;
  color: #8b8b8b;
}

.modal-bar i {
  height: 256px;
  margin-top: 326px;
}

.summary {
  height: 60px;
  margin-top: -58px;
  border-radius: 24px;
  background: #259c41;
  box-shadow: 0 8px 24px rgba(40, 167, 69, 0.14);
}

.card {
  position: relative;
  padding: 0 33px;
  border: 1px solid #e9ecef;
  border-radius: 18px;
  background: #fff;
  box-shadow: 0 3px 8px rgba(0, 0, 0, 0.04);
}

.card h5 {
  display: flex;
  align-items: center;
  gap: 11px;
  border-bottom: 3px solid #e9ecef;
  color: #2c3e50;
  font-size: 28px;
}

.card h5 svg {
  color: #3498db;
}

.card-pay {
  height: 300px;
  margin-top: 46px;
}

.card-pay h5 {
  height: 80px;
  padding-top: 20px;
}

.pay-row {
  display: flex;
  align-items: center;
  height: 70px;
  margin-top: 22px;
  padding: 0 23px 2px;
  border: 1px solid #edf2f7;
  border-radius: 15px;
  background: #f8fafc;
}

.pay-row b {
  flex: 1;
  color: #2c3e50;
  font-weight: 700;
}

.pay-row span {
  margin-right: 17px;
  color: #6c757d;
  font-size: 20px;
}

.pay-row strong {
  color: #259c41;
  font-weight: 700;
}

.pay-total {
  display: flex;
  align-items: center;
  justify-content: space-between;
  height: 82px;
  margin-top: 32px;
  border-top: 1px dashed #dee2e6;
  color: #2c3e50;
}

.pay-total b {
  font-size: 21.2px;
  font-weight: 700;
}

.pay-total strong {
  color: #1e7e34;
  font-size: 24.8px;
  font-weight: 700;
}

/* yellow marker round the payment recap */
.highlight {
  position: absolute;
  left: -2px;
  top: -4px;
  width: 1221px;
  height: 312px;
  border: 5px solid #fff200;
}

.card-trx {
  height: 900px;
  margin-top: 23px;
}

.card-trx h5 {
  height: 82px;
  padding-top: 22px;
}

.groups {
  display: grid;
  grid-template-columns: 1fr 1fr;
  gap: 22px 23px;
  margin-top: 22px;
}

.group {
  min-height: 477px;
  border: 1px solid #e9ecef;
  border-radius: 19px;
  overflow: hidden;
  box-shadow: 0 3px 8px rgba(0, 0, 0, 0.05);
}

.group h6 {
  display: flex;
  align-items: center;
  gap: 11px;
  height: 77px;
  margin-bottom: 11px;
  padding: 0 28px 2px;
  border-bottom: 3px solid #dee2e6;
  background: linear-gradient(135deg, #f8f9fa, #e9ecef);
  color: #2c3e50;
  font-size: 22px;
  text-transform: uppercase;
}

.group h6::before {
  content: '';
  width: 7px;
  height: 28px;
  border-radius: 3px;
  background: linear-gradient(#3498db, #2980b9);
}

.item {
  display: flex;
  align-items: center;
  justify-content: space-between;
  height: 100px;
  padding: 0 28px 2px;
  color: #2c3e50;
  font-size: 20.1px;
  font-weight: 500;
}

.item div {
  display: flex;
  flex-direction: column;
  gap: 6px;
  line-height: 28px;
}

.item small {
  display: flex;
  align-items: center;
  gap: 7px;
  padding-left: 2px;
  color: #95a5a6;
  font-size: 17.7px;
  font-weight: 400;
}

.item small::before {
  content: '';
  width: 5px;
  height: 5px;
  border-radius: 50%;
  background: #dfe3e8;
}

.item b {
  color: #259c41;
  font-size: 21.4px;
  font-weight: 700;
}

.item.lined {
  height: 101px;
  border-bottom: 1px solid #f1f3f5;
}

.sub {
  display: flex;
  align-items: center;
  justify-content: space-between;
  height: 74px;
  margin: 0 28px;
  padding: 0 17px 1px 34px;
  border-top: 1px solid #e3e6e9;
  background: #f8f9fb;
  color: #6c757d;
  font-size: 19.1px;
}

.sub span + span {
  color: #495057;
  font-weight: 500;
}

.modal-footer {
  display: flex;
  flex: 1;
  justify-content: flex-end;
  align-items: center;
  gap: 16px;
  padding: 0 22px 0 0;
  border-top: 1px solid #dee2e6;
}

.modal-footer button {
  height: 53px;
  padding-bottom: 1px;
  border-radius: 8px;
}

.modal-footer .btn-batal {
  width: 93px;
  border: 1.5px solid #6c7d7a;
  color: #6c7d7a;
}

.modal-footer .btn-danger {
  width: 155px;
  background: var(--red);
  color: #fff;
}
```
